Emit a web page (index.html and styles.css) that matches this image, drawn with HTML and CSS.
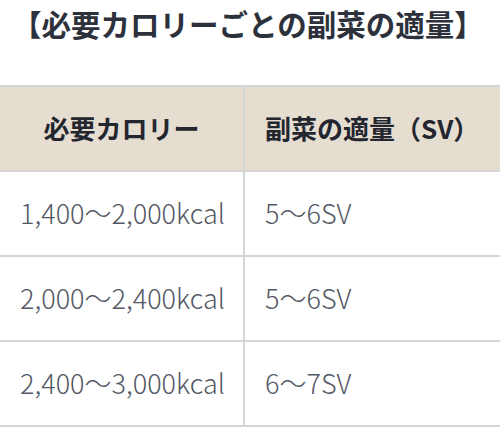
FILE: index.html
```html
<!DOCTYPE html>
<html lang="ja">
<head>
<meta charset="utf-8">
<link rel="stylesheet" href="styles.css">
</head>
<body>
<h3 class="title">【必要カロリーごとの副菜の適量】</h3>
<table class="sv-table">
  <thead>
    <tr><th class="c1">必要カロリー</th><th class="c2">副菜の適量（SV）</th></tr>
  </thead>
  <tbody>
    <tr><td class="c1">1,400～2,000kcal</td><td class="c2">5～6SV</td></tr>
    <tr><td class="c1">2,000～2,400kcal</td><td class="c2">5～6SV</td></tr>
    <tr><td class="c1">2,400～3,000kcal</td><td class="c2">6～7SV</td></tr>
  </tbody>
</table>
</body>
</html>
```
FILE: styles.css
```css
html, body {
  margin: 0;
  padding: 0;
  background: #fff;
  overflow: hidden;
}
body {
  font-family: "Noto Sans CJK JP", "Noto Sans", sans-serif;
  color: #545864;
}
.title {
  margin: 0;
  padding: 2px 0 0 12px;
  font-size: 29.5px;
  line-height: 42px;
  font-weight: bold;
  color: #2c313c;
  height: 85px;
  box-sizing: border-box;
  white-space: nowrap;
}
.sv-table {
  border-collapse: collapse;
  width: 500px;
  table-layout: fixed;
}
.sv-table th, .sv-table td {
  border: 2px solid #d6d6d6;
  font-size: 26px;
  line-height: 32px;
  padding: 25px 20px 26px;
  text-align: left;
  white-space: nowrap;
}
.sv-table td {
  font-weight: 300;
  font-size: 27px;
}
.sv-table th {
  background: #e6ddd1;
  color: #23262e;
  font-weight: bold;
}
.sv-table .c1 {
  width: 244px;
  box-sizing: border-box;
  border-left: none;
}
.sv-table th.c1 {
  text-align: center;
}
.sv-table .c2 {
  border-right: none;
}
```
